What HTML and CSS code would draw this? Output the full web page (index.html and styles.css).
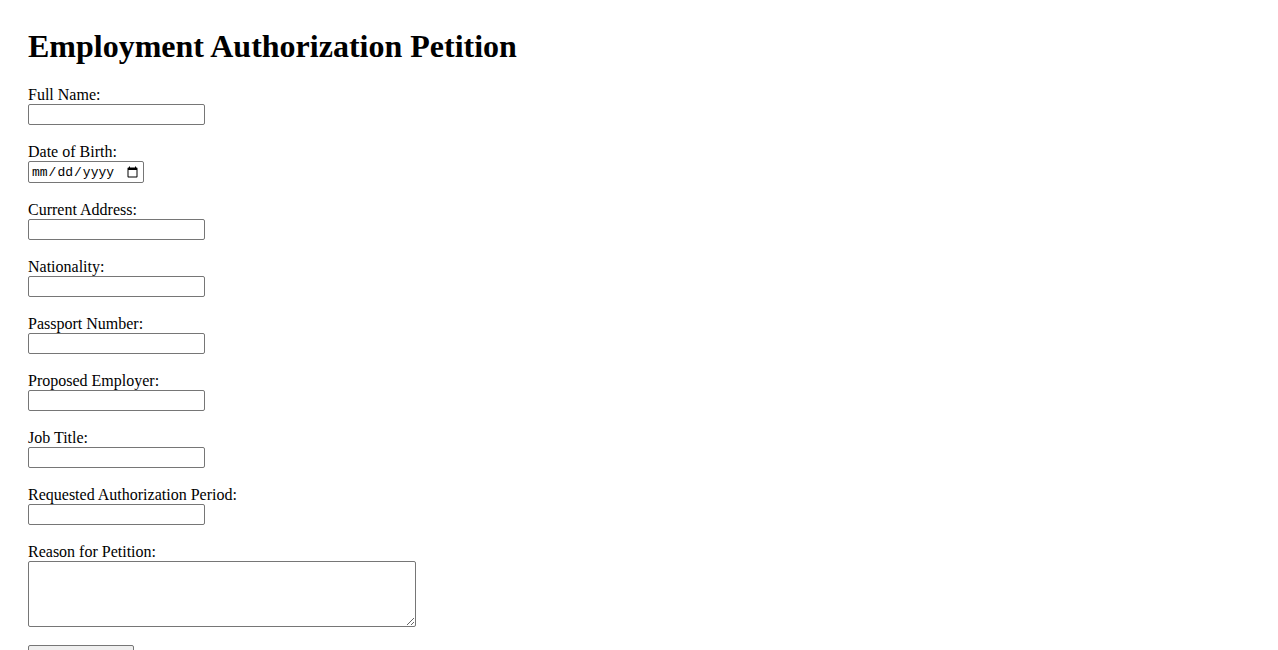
FILE: index.html
```html
<!DOCTYPE html>
<html lang="en">
<head>
<meta charset="utf-8">
<title>Employment Authorization Petition</title>
<link rel="stylesheet" href="styles.css">
</head>
<body>
<h1 class="title">Employment Authorization Petition</h1>
<form class="petition">
  <div class="field">
    <label class="label" for="name">Full Name:</label>
    <input class="text-input" type="text" id="name">
  </div>
  <div class="field">
    <label class="label" for="dob">Date of Birth:</label>
    <input class="date-input" type="date" id="dob">
  </div>
  <div class="field">
    <label class="label" for="address">Current Address:</label>
    <input class="text-input" type="text" id="address">
  </div>
  <div class="field">
    <label class="label" for="nationality">Nationality:</label>
    <input class="text-input" type="text" id="nationality">
  </div>
  <div class="field">
    <label class="label" for="passport">Passport Number:</label>
    <input class="text-input" type="text" id="passport">
  </div>
  <div class="field">
    <label class="label" for="employer">Proposed Employer:</label>
    <input class="text-input" type="text" id="employer">
  </div>
  <div class="field">
    <label class="label" for="job">Job Title:</label>
    <input class="text-input" type="text" id="job">
  </div>
  <div class="field">
    <label class="label" for="period">Requested Authorization Period:</label>
    <input class="text-input" type="text" id="period">
  </div>
  <div class="field">
    <label class="label" for="reason">Reason for Petition:</label>
    <textarea class="text-area" id="reason"></textarea>
  </div>
  <button class="submit" type="submit">Submit Petition</button>
</form>
</body>
</html>
```

FILE: styles.css
```css
html, body {
  margin: 0;
  padding: 0;
  background: #ffffff;
}

body {
  padding: 28px;
  font-family: "Liberation Serif", "Times New Roman", serif;
  font-size: 16px;
  color: #000000;
}

.title {
  margin: 0 0 21px 0;
  font-size: 32px;
  font-weight: bold;
  line-height: 37px;
}

.petition {
  display: flex;
  flex-direction: column;
  align-items: flex-start;
}

.field {
  display: flex;
  flex-direction: column;
  align-items: flex-start;
  margin-bottom: 17.6px;
}

.label {
  line-height: 18.4px;
  height: 18.4px;
}

.text-input,
.date-input,
.text-area {
  box-sizing: border-box;
  margin: 0;
  border: 1px solid #767676;
  border-radius: 2px;
  background: #ffffff;
  font-family: "Liberation Sans", Arial, sans-serif;
  font-size: 13.33px;
}

.text-input {
  width: 177px;
  height: 21px;
  padding: 1px 2px;
}

.date-input {
  width: 116px;
  height: 22px;
  padding: 1px 2px;
  font-family: "Liberation Mono", "Courier New", monospace;
  font-size: 13px;
  color: #000000;
}

.text-area {
  width: 388px;
  height: 66px;
  padding: 2px;
  resize: both;
  font-family: "Liberation Mono", monospace;
}

.submit {
  box-sizing: border-box;
  margin: 0;
  width: 106px;
  height: 21px;
  padding: 1px 6px;
  border: 1px solid #767676;
  border-radius: 2px;
  background: #efefef;
  font-family: "Liberation Sans", Arial, sans-serif;
  font-size: 13.33px;
  color: #000000;
}
```
